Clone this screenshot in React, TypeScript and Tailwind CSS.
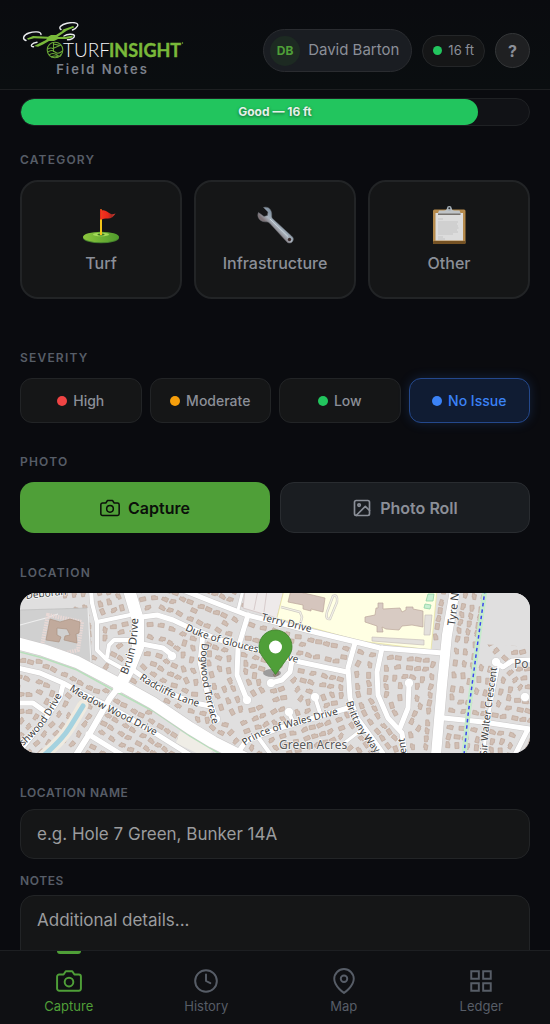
import React, { useState } from 'react';

type Point = [number, number];

interface Road {
  points: Point[];
  width: number;
}

// Streets in map units, width is the carriageway
const ROADS: Road[] = [
  { width: 4, points: [[91, 590], [92, 603], [97, 623], [97, 650], [107, 660], [125, 670]] },
  { width: 4, points: [[97, 622], [130, 615]] },
  { width: 4, points: [[107, 657], [109, 645], [114, 640], [137, 640]] },
  { width: 5, points: [[142, 617], [157, 615], [173, 620], [190, 628], [220, 640], [260, 650], [300, 662], [347, 672]] },
  { width: 5, points: [[142, 644], [163, 648], [172, 655]] },
  { width: 5, points: [[133, 670], [157, 687], [190, 702], [210, 706]] },
  { width: 5, points: [[203, 634], [200, 662], [207, 692], [216, 719]] },
  { width: 5, points: [[18, 668], [40, 673], [63, 683], [83, 694], [110, 707], [150, 730], [190, 755]] },
  { width: 5, points: [[63, 685], [60, 697], [47, 717], [22, 748]] },
  { width: 5, points: [[18, 703], [33, 703], [47, 713]] },
  { width: 5, points: [[88, 734], [122, 755]] },
  { width: 5, points: [[183, 590], [213, 602], [247, 615], [310, 631], [360, 643], [380, 648], [443, 653]] },
  { width: 3, points: [[243, 590], [238, 610]] },
  { width: 5, points: [[248, 615], [238, 648], [237, 675], [247, 700]] },
  { width: 5, points: [[292, 660], [290, 672], [282, 680], [271, 683]] },
  { width: 4, points: [[289, 713], [294, 724]] },
  { width: 4, points: [[315, 697], [321, 716]] },
  { width: 5, points: [[236, 755], [247, 740], [280, 728], [307, 720], [348, 708]] },
  { width: 4, points: [[258, 737], [271, 755]] },
  { width: 5, points: [[355, 643], [348, 668], [350, 698], [357, 718], [377, 745], [384, 755]] },
  { width: 5, points: [[382, 648], [377, 672], [378, 695], [388, 718], [402, 733], [405, 755]] },
  { width: 5, points: [[409, 683], [408, 708], [400, 728]] },
  { width: 3, points: [[343, 744], [360, 731]] },
  { width: 5, points: [[444, 718], [483, 722], [530, 729]] },
  { width: 5, points: [[528, 729], [515, 755]] },
  { width: 5, points: [[498, 664], [503, 667], [512, 661], [532, 660]] },
  { width: 3, points: [[498, 668], [488, 718], [483, 755]] },
  { width: 6, points: [[118, 688], [110, 698], [90, 733], [76, 755]] },
  { width: 12, points: [[129, 590], [138, 620], [138, 647], [130, 667], [119, 687]] },
  { width: 12, points: [[16, 643], [43, 650], [77, 662], [117, 683], [153, 703], [190, 728], [213, 742], [245, 758]] },
  { width: 10, points: [[455, 590], [447, 635], [442, 685], [436, 755]] },
];

const CUL_DE_SACS: Point[] = [
  [172, 656], [247, 700], [271, 683], [289, 712], [315, 697], [409, 683], [496, 662], [525, 697], [216, 719],
];

const toLine = (points: Point[]) => points.map((p) => p.join(',')).join(' ');

const distanceToSegment = (p: Point, a: Point, b: Point) => {
  const dx = b[0] - a[0];
  const dy = b[1] - a[1];
  const t = Math.max(0, Math.min(1, ((p[0] - a[0]) * dx + (p[1] - a[1]) * dy) / (dx * dx + dy * dy)));
  return Math.hypot(p[0] - a[0] - t * dx, p[1] - a[1] - t * dy);
};

const isOnRoad = (p: Point) =>
  ROADS.some((road) =>
    road.points.slice(1).some((b, i) => distanceToSegment(p, road.points[i], b) < road.width / 2 + 3.6)
  );

// Lines both sides of every street with small houses
const buildHouses = () => {
  const houses: { x: number; y: number; angle: number; shape: number }[] = [];
  [6, 15, 24].forEach((depth) => {
    ROADS.forEach((road) => {
      road.points.slice(1).forEach((b, i) => {
        const a = road.points[i];
        const length = Math.hypot(b[0] - a[0], b[1] - a[1]);
        const ux = (b[0] - a[0]) / length;
        const uy = (b[1] - a[1]) / length;
        for (let along = 3; along < length; along += 4) {
          [-1, 1].forEach((side) => {
            const offset = side * (road.width / 2 + depth);
            const p: Point = [a[0] + ux * along - uy * offset, a[1] + uy * along + ux * offset];
            const crowded = houses.some((h) => Math.hypot(h.x - p[0], h.y - p[1]) < 8);
            if (!crowded && !isOnRoad(p)) {
              houses.push({
                x: p[0],
                y: p[1],
                angle: (Math.atan2(uy, ux) * 180) / Math.PI + ((houses.length * 7) % 25) - 12,
                shape: houses.length % 4,
              });
            }
          });
        }
      });
    });
  });
  return houses;
};

const HOUSES = buildHouses();

const HOUSE_SHAPES = [
  'M-3-2H3V2H-3Z',
  'M-3-2H1V-1H3V2H-3Z',
  'M-3-1H-1V-2H3V2H-3Z',
  'M-2-2H3V1H1V2H-3V0H-2Z',
];

const MAP_LABELS: { id: string; d: string; text: string; size: number }[] = [
  { id: 'bruin', d: 'M127 675C134 660 139 640 138 606', text: 'Bruin Drive', size: 11 },
  { id: 'deborah', d: 'M26 599L80 593', text: 'Deborah', size: 10 },
  { id: 'radcliffe', d: 'M139 679C157 691 175 702 212 710', text: 'Radcliffe Lane', size: 10 },
  { id: 'meadow', d: 'M69 690C95 708 125 718 175 747', text: 'Meadow Wood Drive', size: 10 },
  { id: 'ashwood', d: 'M23 746C37 735 52 718 66 686', text: 'shwood Drive', size: 10 },
  { id: 'duke', d: 'M185 630C205 641 240 648 310 666', text: 'Duke of Gloucester Drive', size: 10 },
  { id: 'terry', d: 'M261 620L330 637', text: 'Terry Drive', size: 10 },
  { id: 'dogwood', d: 'M202 643C198 670 204 695 217 740', text: 'Dogwood Terrace', size: 10 },
  { id: 'prince', d: 'M245 746C265 730 300 726 360 708', text: 'Prince of Wales Drive', size: 10 },
  { id: 'brittany', d: 'M346 702C352 725 365 742 390 770', text: 'Brittany Way', size: 10 },
  { id: 'crescent', d: 'M407 758L403 725', text: 'cent', size: 10 },
  { id: 'tyre', d: 'M455 626L460 586', text: 'Tyre N', size: 11 },
  { id: 'walter', d: 'M487 756C488 725 493 700 500 645', text: 'Sir Walter Crescent', size: 10 },
];

const SiteMap: React.FC = () => (
  <svg
    viewBox="20 593 510 160"
    preserveAspectRatio="xMidYMid slice"
    className="block h-40 w-full"
    role="img"
    aria-label="Map of current location"
  >
    <rect x="0" y="570" width="560" height="200" fill="#e0dfdf" />
    {HOUSES.map((h, i) => (
      <path
        key={i}
        d={HOUSE_SHAPES[h.shape]}
        transform={`translate(${h.x} ${h.y}) rotate(${h.angle})`}
        fill="#d0beb3"
        stroke="#bfa99c"
        strokeWidth="0.7"
      />
    ))}

    {/* Zones */}
    <path d="M487 590H535V647L480 644Z" fill="#e0dfdf" />
    <path d="M20 610L88 608L92 665L60 655L20 645Z" fill="#d0d0d0" stroke="#bdbdbd" strokeWidth="0.7" />
    <path d="M20 625L46 618L58 614M88 608L91 662" fill="none" stroke="#eee" strokeWidth="1.2" />
    <path d="M48 615L82 622L78 650L66 653L42 645Z" fill="none" stroke="#e9d9d6" strokeWidth="4" strokeDasharray="1.5 1" />
    <path d="M50 619L60 622L70 619L80 622L79 633L76 634L77 643L64 640L65 636L70 635L67 629L57 628L57 635L61 637L59 642L46 640Z" fill="#c1aa9c" stroke="#ad9383" strokeWidth="0.7" />
    <path d="M245 590H284L277 618L243 608Z" fill="#eeeaea" stroke="#d2c4c4" strokeWidth="0.8" />
    <path d="M258 590L254 610M267 590L264 612" stroke="#d2c4c4" strokeWidth="0.8" />
    <path d="M284 590H437L431 650L360 641L277 618Z" fill="#ffffe3" stroke="#e8e29b" strokeWidth="0.7" />
    <path d="M291 590L325 598L323 612L311 609V611L303 609V605L288 602Z" fill="#d5c5bd" stroke="#bca69b" strokeWidth="0.7" />
    <path d="M281 607L300 612L302 617L300 625M333 596Q338 594 337 602L330 619Q325 620 327 612Z" fill="none" stroke="#cfcbc4" strokeWidth="2.5" />
    <path d="M281 607L300 612L302 617L300 625M333 596Q338 594 337 602L330 619Q325 620 327 612Z" fill="none" stroke="#f1efe6" strokeWidth="1.2" />
    <path d="M365 617L375 615L376 608H378V603H383V609L400 608L402 612L406 610V607H413V609L423 611V627L412 625L402 626L399 630L386 629L382 627L383 632H377V626L365 622Z" fill="#d8cbc3" stroke="#bca69b" strokeWidth="0.7" />
    <path d="M372 637L424 640V645L372 641ZM425 615H432L430 635H424Z" fill="#e3e0dc" stroke="#c9c0bb" strokeWidth="0.7" />
    <path d="M428 594H434L433 601H426ZM425 604L431 605L430 609L424 608Z" fill="#c8efd2" stroke="#8fd3a5" strokeWidth="0.8" />
    <path d="M180 731L215 749L205 757L176 743Z" fill="#efede6" />
    <path d="M83 705Q78 714 70 727T42 757" fill="none" stroke="#efeadf" strokeWidth="11" strokeLinecap="round" />
    <path d="M83 706Q78 714 70 727T42 757" fill="none" stroke="#a5d2df" strokeWidth="5" strokeLinecap="round" />
    <polyline points="16,651 43,658 77,670 115,691 153,711 190,736 225,757" fill="none" stroke="#b7e0bb" strokeWidth="1.5" />

    {/* Streets */}
    {ROADS.map((road, i) => (
      <polyline key={i} points={toLine(road.points)} fill="none" stroke="#c9c7c7" strokeWidth={road.width + 1} strokeLinejoin="round" />
    ))}
    {CUL_DE_SACS.map(([x, y]) => (
      <circle key={`${x}-${y}`} cx={x} cy={y} r="4.6" fill="#fff" stroke="#c9c7c7" strokeWidth="0.6" />
    ))}
    {ROADS.map((road, i) => (
      <polyline key={i} points={toLine(road.points)} fill="none" stroke="#fff" strokeWidth={road.width} strokeLinejoin="round" strokeLinecap="round" />
    ))}

    {/* Creek trail */}
    <polyline points="485,590 477,648 468,715 464,755" fill="none" stroke="#c5ebcb" strokeWidth="5" />
    <polyline points="485,590 477,648 468,715 464,755" fill="none" stroke="#3d45ee" strokeWidth="1.5" strokeDasharray="3.5 3" />

    {/* Labels */}
    <g fontFamily="'Noto Sans', sans-serif" fill="#3f3f3f" stroke="#fff" strokeWidth="1.6" strokeOpacity="0.7" paintOrder="stroke">
      {MAP_LABELS.map((label) => (
        <React.Fragment key={label.id}>
          <path id={label.id} d={label.d} fill="none" stroke="none" />
          <text fontSize={label.size}>
            <textPath href={`#${label.id}`}>{label.text}</textPath>
          </text>
        </React.Fragment>
      ))}
      <text x="279" y="749" fontSize="12" fill="#5a5a5a">Green Acres</text>
      <text x="514" y="668" fontSize="12" fill="#5a5a5a">Po</text>
    </g>

    {/* Pin */}
    <ellipse cx="272" cy="673" rx="9" ry="4" fill="#000" fillOpacity="0.3" />
    <path d="M275.500 674.500L262 656C260 653 259 650 259 646.500A16.500 16.500 0 0 1 292 646.500C292 650 291 653 289 656Z" fill="#4f9f38" stroke="#3e822b" strokeWidth="0.8" />
    <circle cx="275.500" cy="647" r="6.500" fill="#fff" />
  </svg>
);

const Logo: React.FC = () => (
  <svg width="165" height="37" viewBox="20 22 165 37" role="img" aria-label="TurfInsight">
    {/* Rotors */}
    <g fill="none" stroke="#e8eaec" strokeWidth="1.4" strokeLinecap="round">
      <path d="M26 40.500C22 39 23 35 29 33C34 31.300 41 31.300 41 34.500" />
      <path d="M61 29.500C58 28 61 24.500 67 23.200C73 22 79 22.500 77.500 26C76.800 27.500 75 29 72.500 30" />
      <path d="M64 36C67 34 74 33.500 74.500 35.800C74.700 38 71 39.500 67.500 39.800" />
      <path d="M33.500 46.800C29.500 46.500 31.500 43 37 42.300" />
    </g>
    {/* Frame */}
    <g fill="#79b93a">
      <path d="M27 38.500L33 36L48 36.800L51 35L56 35L62 31.200L63 29.500L73 26L74.500 27.200L67 30.500L57.500 37L66 36.800L73 35.500L72 37.800L66 39L58 39L54 41L49 41L43 44.500L38 46.800L34 46L40 43L46 40L47 38.800L34 38.300L28 39.800Z" />
    </g>
    {/* Ball */}
    <g fill="none" stroke="#69a636" strokeWidth="1.1">
      <circle cx="55" cy="50" r="7.800" />
      <path d="M53.500 43V52M53.500 44L60 45.500L54 48M48 52Q52 49 55 52T62.500 51M48 49Q51 47 53.500 49M49 55Q53 52 57 55T61 54M51 57Q55 55 58 57" />
    </g>
    <text x="63" y="57" fontFamily="Lato, sans-serif" fontSize="19" fontWeight="300" fill="#f1f3f5">
      TURF
    </text>
    <text x="109" y="57" fontFamily="Lato, sans-serif" fontSize="18" fontWeight="700" fill="#79b93a" stroke="#79b93a" strokeWidth="0.4">
      INSIGHT
    </text>
    <circle cx="182.500" cy="43" r="0.700" fill="#79b93a" />
  </svg>
);

const FlagIcon: React.FC = () => (
  <svg viewBox="0 0 40 40" className="size-10" aria-hidden="true">
    <defs>
      <linearGradient id="turf" x1="0" x2="1">
        <stop offset="0" stopColor="#8cc63d" />
        <stop offset="1" stopColor="#4f9a2c" />
      </linearGradient>
      <linearGradient id="flag" x1="0" x2="1">
        <stop offset="0" stopColor="#f5321f" />
        <stop offset="0.45" stopColor="#e5281c" />
        <stop offset="0.7" stopColor="#a72a23" />
        <stop offset="1" stopColor="#e04030" />
      </linearGradient>
    </defs>
    <ellipse cx="20" cy="33" rx="18" ry="5.300" fill="#437f2c" />
    <ellipse cx="20" cy="32" rx="18" ry="5.300" fill="url(#turf)" />
    <ellipse cx="20" cy="29.500" rx="8" ry="1.800" fill="#a5d95a" />
    <ellipse cx="20" cy="29.500" rx="3.500" ry="1" fill="#3f7520" />
    <path d="M19 4.500H21V30H19Z" fill="#f5c518" />
    <path d="M20.800 5.500C24 4 27 7.500 30 9C31.500 9.500 33 9 34.500 8.500C32.500 12 29.500 14 26 13.500C24 13.300 22.500 13.500 20.800 14.500Z" fill="url(#flag)" />
    <path d="M19 4.500H20.800V14.500H19Z" fill="#e5281c" />
  </svg>
);

const WrenchIcon: React.FC = () => (
  <svg viewBox="0 0 40 40" className="size-10" aria-hidden="true">
    <defs>
      <linearGradient id="steel" x1="0" y1="1" x2="1" y2="0">
        <stop offset="0.400" stopColor="#7d7276" />
        <stop offset="0.500" stopColor="#a9b3bd" />
        <stop offset="0.600" stopColor="#8696a5" />
      </linearGradient>
    </defs>
    <path
      d="M8.500 2.500L13 7L12.500 10.500L9 11.500L3.500 7.500C1.500 11 4 16.500 10 16.800C12 16.900 13.500 17 15 18.500L31.500 36.500C33 38.500 36 38.500 37.500 36.500C39 34.500 38.500 32.500 36.500 31L18 14C17 13 16.500 12 16.700 10C17 5 13.500 1 8.500 2.500Z"
      fill="url(#steel)"
      stroke="#6c7178"
      strokeWidth="0.500"
    />
    <path d="M15 14L33 31.500" stroke="#ccd5dc" strokeWidth="1" />
    <circle cx="34.500" cy="34.500" r="1.700" fill="#3a2c2c" />
  </svg>
);

const ClipboardIcon: React.FC = () => (
  <svg viewBox="0 0 40 40" className="size-10" aria-hidden="true">
    <rect x="4" y="4.500" width="32.500" height="34.500" rx="1.500" fill="#b58a4c" />
    <rect x="4" y="36" width="32.500" height="3" rx="1" fill="#755224" />
    <rect x="6.500" y="8" width="27.500" height="27.500" fill="#dcdcdc" />
    <path d="M9 14H14M9 17H29M9 19H28M9 21H29M9 23H29.500M9 25H28M9 27H29M9 29H24M9 32H14M9 34H16" stroke="#c4c4c4" strokeWidth="1" />
    <path d="M9 8L10 5.500H15C17 5.500 17.500 4.500 18 3.500H22.500C23 4.500 23.500 5.500 25.500 5.500H30.500L31.500 8V9H9Z" fill="#bfc3c6" />
    <path d="M9 8.500H31.500V10H9Z" fill="#77736f" />
    <circle cx="20.300" cy="3.500" r="2.400" fill="#a9b4bc" />
    <circle cx="20.300" cy="3.300" r="1" fill="#2b2d30" />
  </svg>
);

interface IconProps {
  className?: string;
}

const CameraIcon: React.FC<IconProps> = ({ className }) => (
  <svg viewBox="0 0 24 24" fill="none" stroke="currentColor" strokeWidth="1.8" strokeLinecap="round" strokeLinejoin="round" className={className} aria-hidden="true">
    <path d="M23 19a2 2 0 0 1-2 2H3a2 2 0 0 1-2-2V8a2 2 0 0 1 2-2h4l2-3h6l2 3h4a2 2 0 0 1 2 2z" />
    <circle cx="12" cy="13" r="4" />
  </svg>
);

const ImageIcon: React.FC<IconProps> = ({ className }) => (
  <svg viewBox="0 0 24 24" fill="none" stroke="currentColor" strokeWidth="2" strokeLinecap="round" strokeLinejoin="round" className={className} aria-hidden="true">
    <rect x="3" y="3" width="18" height="18" rx="2" />
    <circle cx="8.500" cy="8.500" r="1.500" />
    <path d="M21 15l-5-5L5 21" />
  </svg>
);

const ClockIcon: React.FC<IconProps> = ({ className }) => (
  <svg viewBox="0 0 24 24" fill="none" stroke="currentColor" strokeWidth="1.800" strokeLinecap="round" strokeLinejoin="round" className={className} aria-hidden="true">
    <circle cx="12" cy="12" r="10" />
    <path d="M12 6v6l4 2" />
  </svg>
);

const PinIcon: React.FC<IconProps> = ({ className }) => (
  <svg viewBox="0 0 24 24" fill="none" stroke="currentColor" strokeWidth="1.800" strokeLinecap="round" strokeLinejoin="round" className={className} aria-hidden="true">
    <path d="M21 10c0 7-9 13-9 13s-9-6-9-13a9 9 0 0 1 18 0z" />
    <circle cx="12" cy="10" r="3" />
  </svg>
);

const GridIcon: React.FC<IconProps> = ({ className }) => (
  <svg viewBox="0 0 24 24" fill="none" stroke="currentColor" strokeWidth="1.800" className={className} aria-hidden="true">
    <path d="M3 3h7v7H3zM14 3h7v7h-7zM14 14h7v7h-7zM3 14h7v7H3z" />
  </svg>
);

const CATEGORIES = [
  { label: 'Turf', icon: FlagIcon },
  { label: 'Infrastructure', icon: WrenchIcon },
  { label: 'Other', icon: ClipboardIcon },
];

const SEVERITIES = [
  { label: 'High', dot: 'bg-[#ef4444]' },
  { label: 'Moderate', dot: 'bg-[#f59e0b]' },
  { label: 'Low', dot: 'bg-[#22c55e]' },
  { label: 'No Issue', dot: 'bg-[#3b82f6]' },
];

const NAV_ITEMS = [
  { label: 'Capture', icon: CameraIcon },
  { label: 'History', icon: ClockIcon },
  { label: 'Map', icon: PinIcon },
  { label: 'Ledger', icon: GridIcon },
];

const SectionTitle: React.FC<{ children: React.ReactNode }> = ({ children }) => (
  <h2 className="text-xs leading-4 font-semibold uppercase tracking-widest text-[#575d67]">{children}</h2>
);

export default function App() {
  const [category, setCategory] = useState('');
  const [severity, setSeverity] = useState('No Issue');
  const [tab, setTab] = useState('Capture');

  return (
    <div className="flex h-screen flex-col bg-[#0a0b0f] font-['Inter',sans-serif] text-[#8b8f98]">
      {/* Header */}
      <header className="flex shrink-0 items-center justify-between border-b border-[#1d1f21] bg-linear-to-b from-[#0a0b0f] to-[#0a0e10] px-5 pt-[22px] pb-2.5">
        <div className="flex flex-col items-center">
          <Logo />
          <span className="text-[13px] leading-5 font-semibold tracking-[2px] text-[#7c818b]">Field Notes</span>
        </div>
        <div className="flex items-center gap-2.5">
          <button type="button" className="flex h-[43px] items-center gap-2 rounded-full border border-[#2a2c30] bg-[#1a1d22] pr-3 pl-1.5">
            <span className="flex size-[30px] items-center justify-center rounded-full bg-[#1d2a22] text-xs font-bold text-[#4f9f38]">DB</span>
            <span className="text-[15px]">David Barton</span>
          </button>
          <div className="flex h-8 items-center gap-1.5 rounded-full border border-[#242628] bg-[#151617] px-2.5 text-[13px]">
            <span className="size-[9px] rounded-full bg-[#22c55e]" />
            16 ft
          </div>
          <button type="button" aria-label="Help" className="size-[35px] rounded-full border border-[#343638] bg-[#1f2022] text-base font-bold">
            ?
          </button>
        </div>
      </header>

      <main className="min-h-0 flex-1 overflow-hidden px-5 pt-2">
        {/* GPS accuracy */}
        <div className="relative h-7 overflow-hidden rounded-full border border-[#1f2124] bg-[#111216]">
          <div className="h-full w-9/10 rounded-full bg-[#22c55e]" />
          <span className="absolute inset-0 flex items-center justify-center text-xs font-bold text-[#e6efe9] text-shadow-[0_1px_3px_#00000080]">Good — 16 ft</span>
        </div>

        <section className="mt-[26px]">
          <SectionTitle>Category</SectionTitle>
          <div className="mt-3 grid grid-cols-3 gap-3">
            {CATEGORIES.map(({ label, icon: Icon }) => (
              <button
                key={label}
                type="button"
                aria-pressed={category === label}
                onClick={() => setCategory(label)}
                className="flex h-[119px] flex-col items-center justify-center gap-1.5 rounded-[18px] border-2 border-[#222426] bg-[#151617] text-base font-medium"
              >
                <Icon />
                {label}
              </button>
            ))}
          </div>
        </section>

        <section className="mt-[51px]">
          <SectionTitle>Severity</SectionTitle>
          <div className="mt-3 grid grid-cols-4 gap-2">
            {SEVERITIES.map(({ label, dot }) => (
              <button
                key={label}
                type="button"
                aria-pressed={severity === label}
                onClick={() => setSeverity(label)}
                className={`flex h-[45px] items-center justify-center gap-1.5 rounded-xl border text-sm font-medium ${
                  severity === label
                    ? 'border-[#24488c] bg-[#101c33] text-[#3b82f6] shadow-[0_0_12px_#3b82f630]'
                    : 'border-[#222426] bg-[#151617]'
                }`}
              >
                <span className={`size-2.5 rounded-full ${dot}`} />
                {label}
              </button>
            ))}
          </div>
        </section>

        <section className="mt-[31px]">
          <SectionTitle>Photo</SectionTitle>
          <div className="mt-3 grid grid-cols-2 gap-2.5">
            <button type="button" className="flex h-[51px] items-center justify-center gap-2 rounded-[14px] bg-[#4f9f38] text-base font-semibold text-[#0b0f0a]">
              <CameraIcon className="size-5" />
              Capture
            </button>
            <button type="button" className="flex h-[51px] items-center justify-center gap-2 rounded-[14px] border border-[#292c30] bg-[#1a1d21] text-base font-semibold">
              <ImageIcon className="size-5" />
              Photo Roll
            </button>
          </div>
        </section>

        <section className="mt-8">
          <SectionTitle>Location</SectionTitle>
          <div className="mt-3 overflow-hidden rounded-2xl">
            <SiteMap />
          </div>
        </section>

        <form className="mt-8">
          <label htmlFor="location-name" className="block text-xs leading-4 font-semibold uppercase tracking-wider text-[#575d67]">
            Location Name
          </label>
          <input
            id="location-name"
            type="text"
            placeholder="e.g. Hole 7 Green, Bunker 14A"
            className="mt-2 block h-[50px] w-full rounded-[14px] border border-[#222426] bg-[#151617] px-4 text-[17px] text-white placeholder:text-[#9b9c9e]"
          />
          <label htmlFor="notes" className="mt-3.5 block text-xs leading-4 font-semibold uppercase tracking-wider text-[#575d67]">
            Notes
          </label>
          <textarea
            id="notes"
            rows={3}
            placeholder="Additional details..."
            className="mt-1.5 block w-full resize-none rounded-[14px] border border-[#222426] bg-[#151617] px-4 py-3 text-[17px] text-white placeholder:text-[#9b9c9e]"
          />
        </form>
      </main>

      {/* Bottom navigation */}
      <nav className="grid h-[74px] shrink-0 grid-cols-4 border-t border-[#1d1f22] bg-[#0f1013]">
        {NAV_ITEMS.map(({ label, icon: Icon }) => (
          <button
            key={label}
            type="button"
            onClick={() => setTab(label)}
            className={`flex flex-col items-center text-[13px] leading-4 ${tab === label ? 'text-[#4f9f38]' : 'text-[#575d67]'}`}
          >
            <span className={`h-[3px] w-6 rounded-b-sm ${tab === label ? 'bg-[#4f9f38]' : ''}`} />
            <Icon className="mt-3.5 mb-1 size-[26px]" />
            {label}
          </button>
        ))}
      </nav>
    </div>
  );
}
